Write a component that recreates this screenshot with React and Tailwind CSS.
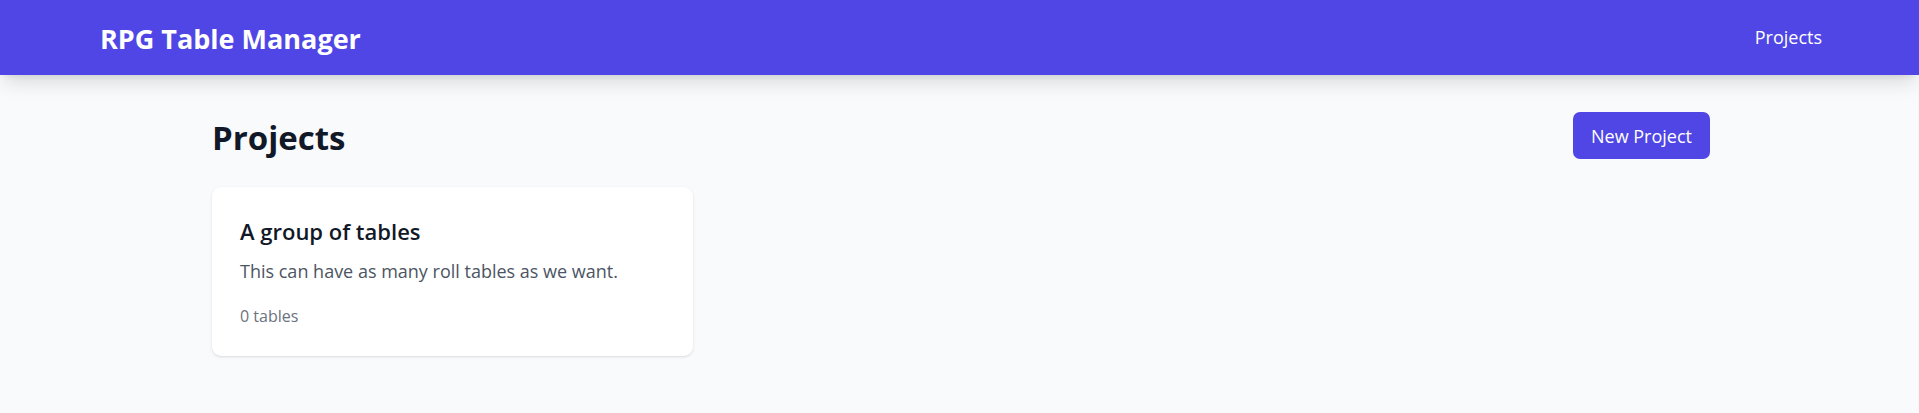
export default function App() {
  return (
    <div className="min-h-screen bg-[#f9fafb] font-['Open_Sans',sans-serif] text-[#111827]">
      <header className="bg-[#4f46e5] text-white shadow-[0_12px_18px_-4px_rgba(0,0,0,0.12),0_5px_7px_-5px_rgba(0,0,0,0.1)]">
        <nav className="flex items-center justify-between pt-[21px] pr-[97px] pb-[19px] pl-[100px]">
          <a href="#home" className="text-[27px] leading-[35px] font-bold">RPG Table Manager</a>
          <a href="#projects" className="pb-1 text-[18px] leading-7">Projects</a>
        </nav>
      </header>
      <main className="pt-[37px] pr-[209px] pb-9 pl-[212px]">
        <div className="mb-7 flex items-center justify-between">
          <h1 className="pt-1 text-[33px] leading-[42px] font-bold">Projects</h1>
          <button type="button" className="rounded-[7px] bg-[#4f46e5] px-[18px] pt-2.5 pb-[9px] text-[18px] leading-7 text-white">New Project</button>
        </div>
        <div className="grid grid-cols-3 gap-7">
          <a href="#project" className="rounded-[9px] bg-white p-7 shadow">
            <h2 className="mb-[9px] text-[22px] leading-[33px] font-semibold">A group of tables</h2>
            <p className="mb-[19px] text-[18px] leading-7 text-[#4b5563]">This can have as many roll tables as we want.</p>
            <p className="text-[16px] leading-6 text-[#6b7280]">0 tables</p>
          </a>
        </div>
      </main>
    </div>
  );
}
